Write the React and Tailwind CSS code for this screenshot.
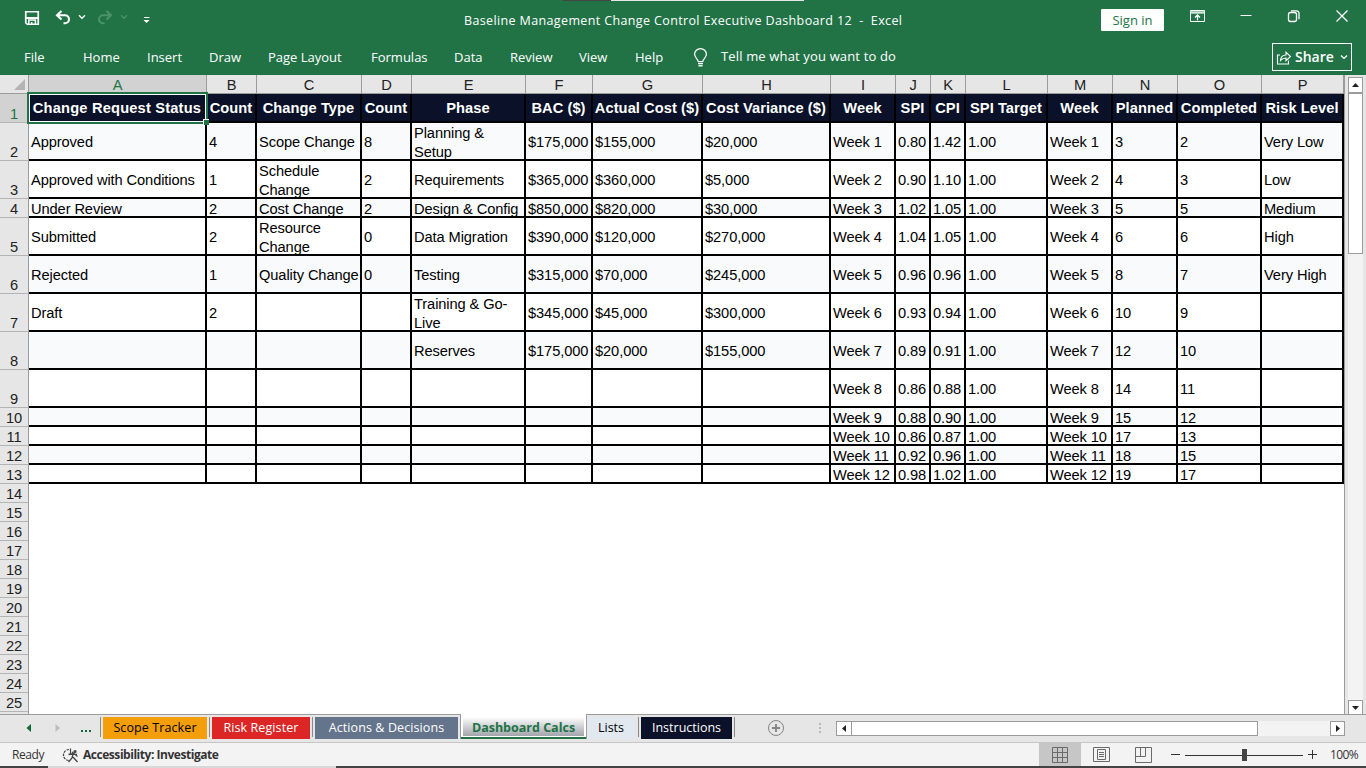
import React, { useState } from 'react';

const columns = [
  { id: 'A', width: 'w-[178px]', title: 'Change Request Status' },
  { id: 'B', width: 'w-[50px]', title: 'Count' },
  { id: 'C', width: 'w-[105px]', title: 'Change Type' },
  { id: 'D', width: 'w-[50px]', title: 'Count' },
  { id: 'E', width: 'w-[114px]', title: 'Phase' },
  { id: 'F', width: 'w-[67px]', title: 'BAC ($)' },
  { id: 'G', width: 'w-[110px]', title: 'Actual Cost ($)' },
  { id: 'H', width: 'w-[128px]', title: 'Cost Variance ($)' },
  { id: 'I', width: 'w-[65px]', title: 'Week' },
  { id: 'J', width: 'w-[35px]', title: 'SPI' },
  { id: 'K', width: 'w-[35px]', title: 'CPI' },
  { id: 'L', width: 'w-[82px]', title: 'SPI Target' },
  { id: 'M', width: 'w-[65px]', title: 'Week' },
  { id: 'N', width: 'w-[65px]', title: 'Planned' },
  { id: 'O', width: 'w-[84px]', title: 'Completed' },
  { id: 'P', width: 'w-[82px]', title: 'Risk Level' },
];

const rows = [
  ['Approved', '4', 'Scope Change', '8', 'Planning &\nSetup', '$175,000', '$155,000', '$20,000', 'Week 1', '0.80', '1.42', '1.00', 'Week 1', '3', '2', 'Very Low'],
  ['Approved with Conditions', '1', 'Schedule\nChange', '2', 'Requirements', '$365,000', '$360,000', '$5,000', 'Week 2', '0.90', '1.10', '1.00', 'Week 2', '4', '3', 'Low'],
  ['Under Review', '2', 'Cost Change', '2', 'Design & Config', '$850,000', '$820,000', '$30,000', 'Week 3', '1.02', '1.05', '1.00', 'Week 3', '5', '5', 'Medium'],
  ['Submitted', '2', 'Resource\nChange', '0', 'Data Migration', '$390,000', '$120,000', '$270,000', 'Week 4', '1.04', '1.05', '1.00', 'Week 4', '6', '6', 'High'],
  ['Rejected', '1', 'Quality Change', '0', 'Testing', '$315,000', '$70,000', '$245,000', 'Week 5', '0.96', '0.96', '1.00', 'Week 5', '8', '7', 'Very High'],
  ['Draft', '2', '', '', 'Training & Go-\nLive', '$345,000', '$45,000', '$300,000', 'Week 6', '0.93', '0.94', '1.00', 'Week 6', '10', '9', ''],
  ['', '', '', '', 'Reserves', '$175,000', '$20,000', '$155,000', 'Week 7', '0.89', '0.91', '1.00', 'Week 7', '12', '10', ''],
  ['', '', '', '', '', '', '', '', 'Week 8', '0.86', '0.88', '1.00', 'Week 8', '14', '11', ''],
  ['', '', '', '', '', '', '', '', 'Week 9', '0.88', '0.90', '1.00', 'Week 9', '15', '12', ''],
  ['', '', '', '', '', '', '', '', 'Week 10', '0.86', '0.87', '1.00', 'Week 10', '17', '13', ''],
  ['', '', '', '', '', '', '', '', 'Week 11', '0.92', '0.96', '1.00', 'Week 11', '18', '15', ''],
  ['', '', '', '', '', '', '', '', 'Week 12', '0.98', '1.02', '1.00', 'Week 12', '19', '17', ''],
];

const shortRows = [4, 10, 11, 12, 13];
const emptyRows = [14, 15, 16, 17, 18, 19, 20, 21, 22, 23, 24, 25];

const menu = [
  { label: 'File', width: 'w-[59px]' },
  { label: 'Home', width: 'w-16' },
  { label: 'Insert', width: 'w-[62px]' },
  { label: 'Draw', width: 'w-[59px]' },
  { label: 'Page Layout', width: 'w-[103px]' },
  { label: 'Formulas', width: 'w-[83px]' },
  { label: 'Data', width: 'w-14' },
  { label: 'Review', width: 'w-[69px]' },
  { label: 'View', width: 'w-14' },
  { label: 'Help', width: 'w-[58px]' },
];

function TitleBar() {
  return (
    <div className="h-10 flex items-start text-white">
      {/* Quick access */}
      <svg className="w-40 h-10" viewBox="0 0 160 40" fill="none">
        <path d="M25.75 11.75h12.5v12.5h-11l-1.5-1.5z" stroke="#fff" strokeWidth="1.7" />
        <path d="M26 18h12" stroke="#fff" strokeWidth="2" />
        <path d="M28.800 24v-4h6.600v4" stroke="#fff" strokeWidth="1.500" />
        <path d="M31 22h1.500v2.500H31z" fill="#fff" />
        <path d="M61.500 11L57 15.300l4.500 4.200M57.500 15.300h7.500a4 4 0 010 8h-1.500" stroke="#fff" strokeWidth="2.100" />
        <path d="M79 15.300l3 3 3-3" stroke="#fff" strokeWidth="1.300" />
        <g stroke="#4d9169">
          <path d="M106.500 11l4.500 4.300-4.500 4.200M110.500 15.300H103a4 4 0 000 8h1.500" strokeWidth="2.100" />
          <path d="M121 15.300l3 3 3-3" strokeWidth="1.300" />
        </g>
        <path d="M144 17.500h5.500" stroke="#fff" />
        <path d="M143.500 20h6l-3 3z" fill="#fff" />
      </svg>
      <div className="w-[304px]" />
      <div className="w-[637px] h-10 leading-[41px] text-[12.5px] tracking-[0.37px] whitespace-pre">
        Baseline Management Change Control Executive Dashboard 12  -  Excel
      </div>
      <button className="mt-[9px] w-[63px] h-[22px] bg-white text-[#217346] text-[13px] leading-[22px] rounded-[1px]">
        Sign in
      </button>
      <svg className="w-[202px] h-10" viewBox="1164 0 202 40" fill="none" stroke="#fff">
        <path d="M1190.500 10.500h14v11h-14z" />
        <path d="M1190.500 12.500h14" strokeWidth="2.500" stroke="#cfe2d7" />
        <path d="M1197.500 20.500v-5M1195 17.500l2.500-2.500 2.500 2.500" strokeWidth="1.300" />
        <path d="M1240.500 15.500h11" />
        <rect x="1288.500" y="12.500" width="8" height="9" rx="2" strokeWidth="1.300" />
        <path d="M1291 10.800h5.500a2.500 2.500 0 012.500 2.500v6" strokeWidth="1.300" />
        <path d="M1336.500 10.500l11 11M1347.500 10.500l-11 11" strokeWidth="1.300" />
      </svg>
    </div>
  );
}

function MenuBar() {
  return (
    <div className="h-[35px] flex text-white text-[13px] leading-[35px] pl-6">
      {menu.map((item) => (
        <div key={item.label} className={`${item.width} whitespace-nowrap`}>{item.label}</div>
      ))}
      <svg className="w-[28px] h-[35px]" viewBox="693 40 28 35" fill="none" stroke="#fff" strokeWidth="1.200">
        <path d="M698.200 61.500c0-2.500-3.600-3.700-3.600-7.200a5.900 5.700 0 0111.800 0c0 3.500-3.600 4.700-3.600 7.200z" />
        <path d="M698 63.500h5M698.500 65.800h4" strokeWidth="1.500" />
      </svg>
      <div className="w-[551px] leading-[33px] tracking-[0.15px]">Tell me what you want to do</div>
      <button className="mt-[3px] w-[80px] h-7 border border-white flex items-center">
        <svg className="w-[22px] h-[26px]" viewBox="0 0 22 26" fill="none" stroke="#fff" strokeWidth="1.100">
          <path d="M7 11H4.500v9h11v-3.500" />
          <path d="M7.500 16.500c.3-4 2.500-5.500 5.500-5.500V8.200l4.500 4.300-4.500 4.200V14c-2.500 0-4 .7-5.500 2.500z" />
        </svg>
        <span className="w-[45px] text-left text-sm leading-[26px] font-semibold">Share</span>
        <svg className="w-2 h-2" viewBox="0 0 8 8" fill="none" stroke="#fff" strokeWidth="1.200">
          <path d="M1 2.500l3 3 3-3" />
        </svg>
      </button>
    </div>
  );
}

function RowNumber({ n, active }) {
  return (
    <div
      className={`w-[29px] shrink-0 border-r border-b border-r-[#9b9b9b] border-b-[#b4b4b4] flex items-end justify-center ${
        active ? 'bg-[#d2d2d2] text-[#217346]' : 'bg-[#e6e6e6] text-[#222]'
      }`}
    >
      <span className="leading-[15px]">{n}</span>
    </div>
  );
}

function Cell({ text, width, short, striped }) {
  const nudge = short || text.includes('\n') ? 'top-0.5' : 'top-px';
  return (
    <div
      className={`${width} border-r-2 border-b-2 border-black pl-0.5 flex items-center overflow-hidden ${
        striped ? 'bg-[#f8fafc]' : 'bg-white'
      }`}
    >
      <span className={`relative ${nudge} leading-[19px] whitespace-pre`}>{text}</span>
    </div>
  );
}

function Sheet() {
  return (
    <div className="w-[1345px] h-[639px] overflow-hidden bg-white border-r border-[#9b9b9b] font-['Liberation_Sans',Arial,sans-serif] text-[14.67px] tracking-[-0.1px] text-black">
      {/* Column letters */}
      <div className="flex h-[19px]">
        <div className="w-[29px] bg-[#e6e6e6] border-r border-b border-[#9b9b9b] flex items-end justify-end p-[3px]">
          <svg className="w-[11px] h-[11px]" viewBox="0 0 11 11"><path d="M11 0v11H0z" fill="#b4b4b4" /></svg>
        </div>
        {columns.map((col) => (
          <div
            key={col.id}
            className={`${col.width} border-r border-b border-[#9b9b9b] text-center leading-[20px] ${
              col.id === 'A' ? 'bg-[#d2d2d2] text-[#217346]' : 'bg-[#e6e6e6] text-[#222]'
            }`}
          >
            {col.id}
          </div>
        ))}
      </div>

      {/* Titles */}
      <div className="flex h-[29px]">
        <RowNumber n={1} active />
        {columns.map((col) => (
          <div
            key={col.id}
            className={`${col.width} relative border-r-2 border-b-2 border-black bg-[#0a1128] text-white font-bold flex justify-center leading-[29px] whitespace-nowrap ${
              col.id === 'A' ? 'tracking-[0.18px]' : 'tracking-[0.06px]'
            }`}
          >
            {col.title}
            {col.id === 'A' && (
              <div className="absolute -left-0.5 -top-0.5 w-[181px] h-8 border-2 border-[#217346] z-10">
                <div className="w-full h-full border border-white" />
                <div className="absolute -right-[3px] -bottom-[3px] w-1.5 h-1.5 bg-[#217346] border-l border-t border-white" />
              </div>
            )}
          </div>
        ))}
      </div>

      {/* Data */}
      {rows.map((cells, i) => {
        const n = i + 2;
        const short = shortRows.includes(n);
        return (
          <div key={n} className={`flex ${short ? 'h-[19px]' : 'h-[38px]'}`}>
            <RowNumber n={n} />
            {cells.map((text, c) => (
              <Cell key={columns[c].id} text={text} width={columns[c].width} short={short} striped={n % 2 === 0} />
            ))}
          </div>
        );
      })}

      {emptyRows.map((n) => (
        <div key={n} className="flex h-[19px]">
          <RowNumber n={n} />
        </div>
      ))}
      <div className="w-[29px] h-[3px] bg-[#e6e6e6] border-r border-[#9b9b9b]" />
    </div>
  );
}

function VerticalScroll() {
  return (
    <div className="w-[21px] pl-[3px] pt-0.5 bg-[#e6e6e6]">
      <div className="w-[15px] h-[638px] bg-[#f3f3f3] flex flex-col">
        <div className="h-4 bg-white border border-[#9b9b9b] flex items-center justify-center">
          <svg className="w-[7px] h-1" viewBox="0 0 7 4"><path d="M3.500 0L7 4H0z" fill="#222" /></svg>
        </div>
        <div className="h-[161px] bg-white border border-[#9b9b9b]" />
        <div className="mt-auto h-[15px] bg-white border border-[#9b9b9b] flex items-center justify-center">
          <svg className="w-[7px] h-1" viewBox="0 0 7 4"><path d="M0 0h7L3.500 4z" fill="#222" /></svg>
        </div>
      </div>
    </div>
  );
}

function Divider({ width }) {
  return (
    <div className={`${width} h-5 flex justify-center`}>
      <i className="w-px bg-[#8a8a8a]" />
    </div>
  );
}

function SheetTabs({ active, onSelect }) {
  const base = 'h-[22px] leading-[22px] text-center whitespace-nowrap';
  return (
    <div className="h-[28px] bg-[#e6e6e6] flex items-start text-[12.5px]">
      <div className="w-[461px] h-[25px] border-t border-r border-[#9b9b9b] flex pt-0.5">
        <svg className="w-[100px] h-[22px]" viewBox="0 717 100 22">
          <path d="M31 724v8l-4.500-4z" fill="#0e6839" />
          <path d="M55.500 724v8l4.500-4z" fill="#bdbdbd" />
          <path d="M81 730h2v2h-2zM85 730h2v2h-2zM89 730h2v2h-2z" fill="#0e6839" />
        </svg>
        <div className="w-[3px] h-5 border-l border-[#8a8a8a]" />
        <div className={`${base} w-[104px] bg-[#f59e0b] text-black tracking-[0.1px]`} onClick={() => onSelect('Scope Tracker')}>Scope Tracker</div>
        <Divider width="w-[5px]" />
        <div className={`${base} w-[98px] bg-[#dc2626] text-white tracking-[0.1px]`}>Risk Register</div>
        <Divider width="w-[5px]" />
        <div className={`${base} w-[143px] bg-[#64748b] text-white tracking-[0.1px]`}>Actions &amp; Decisions</div>
      </div>
      <div className="w-[125px] h-[25px] bg-white border-b-2 border-[#217346] pt-[3px] px-0.5">
        <div className="h-[19px] leading-[21px] text-center font-bold text-[#217346] bg-linear-to-b from-white to-[#a3a5ac] whitespace-nowrap">
          {active}
        </div>
      </div>
      <div className="flex-1 h-[25px] border-t border-l border-[#9b9b9b] flex pt-0.5">
        <div className={`${base} w-12 bg-[#e2e8f0] text-black`}>Lists</div>
        <Divider width="w-[6px]" />
        <div className={`${base} w-[91px] bg-[#0a1128] text-white`}>Instructions</div>
        <Divider width="w-[5px]" />
        <svg className="w-[99px] h-[22px]" viewBox="737 717 99 22" fill="none" stroke="#858585">
          <circle cx="776" cy="728" r="7.500" />
          <path d="M772 728h8M776 724v8" strokeWidth="1.800" />
          <path d="M819 723h2v2h-2zM819 727h2v2h-2zM819 731h2v2h-2z" fill="#b8b8b8" stroke="none" />
        </svg>
        {/* Horizontal scroll */}
        <div className="mt-1 w-[509px] h-[15px] bg-[#f3f3f3] flex">
          <div className="w-[16px] bg-white border border-[#9b9b9b] flex items-center justify-center">
            <svg className="w-1 h-[7px]" viewBox="0 0 4 7"><path d="M4 0v7L0 3.500z" fill="#222" /></svg>
          </div>
          <div className="-ml-px w-[407px] bg-white border border-[#9b9b9b]" />
          <div className="ml-auto w-[15px] bg-white border border-[#9b9b9b] flex items-center justify-center">
            <svg className="w-1 h-[7px]" viewBox="0 0 4 7"><path d="M0 0v7l4-3.500z" fill="#222" /></svg>
          </div>
        </div>
      </div>
    </div>
  );
}

function StatusBar() {
  return (
    <div className="h-[24px] bg-[#f3f3f3] border-t border-[#c6c6c6] flex text-xs leading-[24px] text-[#333]">
      <div className="w-[62px] pl-3 tracking-[-0.4px]">Ready</div>
      <svg className="w-[20px] h-[23px]" viewBox="62 743 20 23" fill="none" stroke="#444" strokeWidth="1.200">
        <path d="M69 749.500a5.500 5.500 0 000 11" strokeDasharray="2.500 1" />
        <path d="M70.500 748.500v6" />
        <path d="M68.500 754.500l3.500-.5 5 .5M73 754l-1 4-3.500 4M73 757l4.500 5M72 752l5.500 4.500" strokeWidth="1.300" />
        <circle cx="75" cy="751.500" r="1" fill="#444" />
      </svg>
      <div className="w-[957px] pl-px font-bold tracking-[-0.46px]">Accessibility: Investigate</div>
      <svg className="w-[286px] h-[23px]" viewBox="1039 743 286 23" fill="none" stroke="#6a6a6a">
        <path d="M1039 743h42v23h-42z" fill="#c6c6c6" stroke="none" />
        <path d="M1052.500 747.500h15v15h-15zM1057.500 747.500v15M1062.500 747.500v15M1052.500 752.500h15M1052.500 757.500h15" />
        <path d="M1093.500 747.500h16v14h-16zM1097.500 749.500h8v10h-8zM1099 752.500h5M1099 754.500h5M1099 756.500h5" />
        <path d="M1135.500 747.500h16v15h-16zM1135.500 756.500h10v-9M1140.500 747.500v9" />
        <path d="M1171 754.500h9M1185 755.500h118M1308 754.500h9M1312.500 750v9" stroke="#333" />
        <path d="M1242 749h5v12h-5z" fill="#444" stroke="none" />
      </svg>
      <div className="pl-[5px] tracking-[-0.6px]">100%</div>
    </div>
  );
}

export default function App() {
  const [activeTab, setActiveTab] = useState('Dashboard Calcs');

  return (
    <div className="w-[1366px] h-[768px] overflow-hidden flex flex-col bg-[#e6e6e6] font-['Open_Sans','Noto_Sans',sans-serif]">
      <div className="relative bg-[#217346]">
        <div className="absolute top-0 left-[563px] w-[241px] h-px bg-[#e6e6e6] border-l-[48px] border-[#444]" />
        <TitleBar />
        <MenuBar />
      </div>
      <div className="flex h-[639px]">
        <Sheet />
        <VerticalScroll />
      </div>
      <SheetTabs active={activeTab} onSelect={setActiveTab} />
      <StatusBar />
      <div className="h-0.5 bg-[#444] flex">
        <div className="ml-12 w-[288px] bg-[#d8d8d8]" />
      </div>
    </div>
  );
}
